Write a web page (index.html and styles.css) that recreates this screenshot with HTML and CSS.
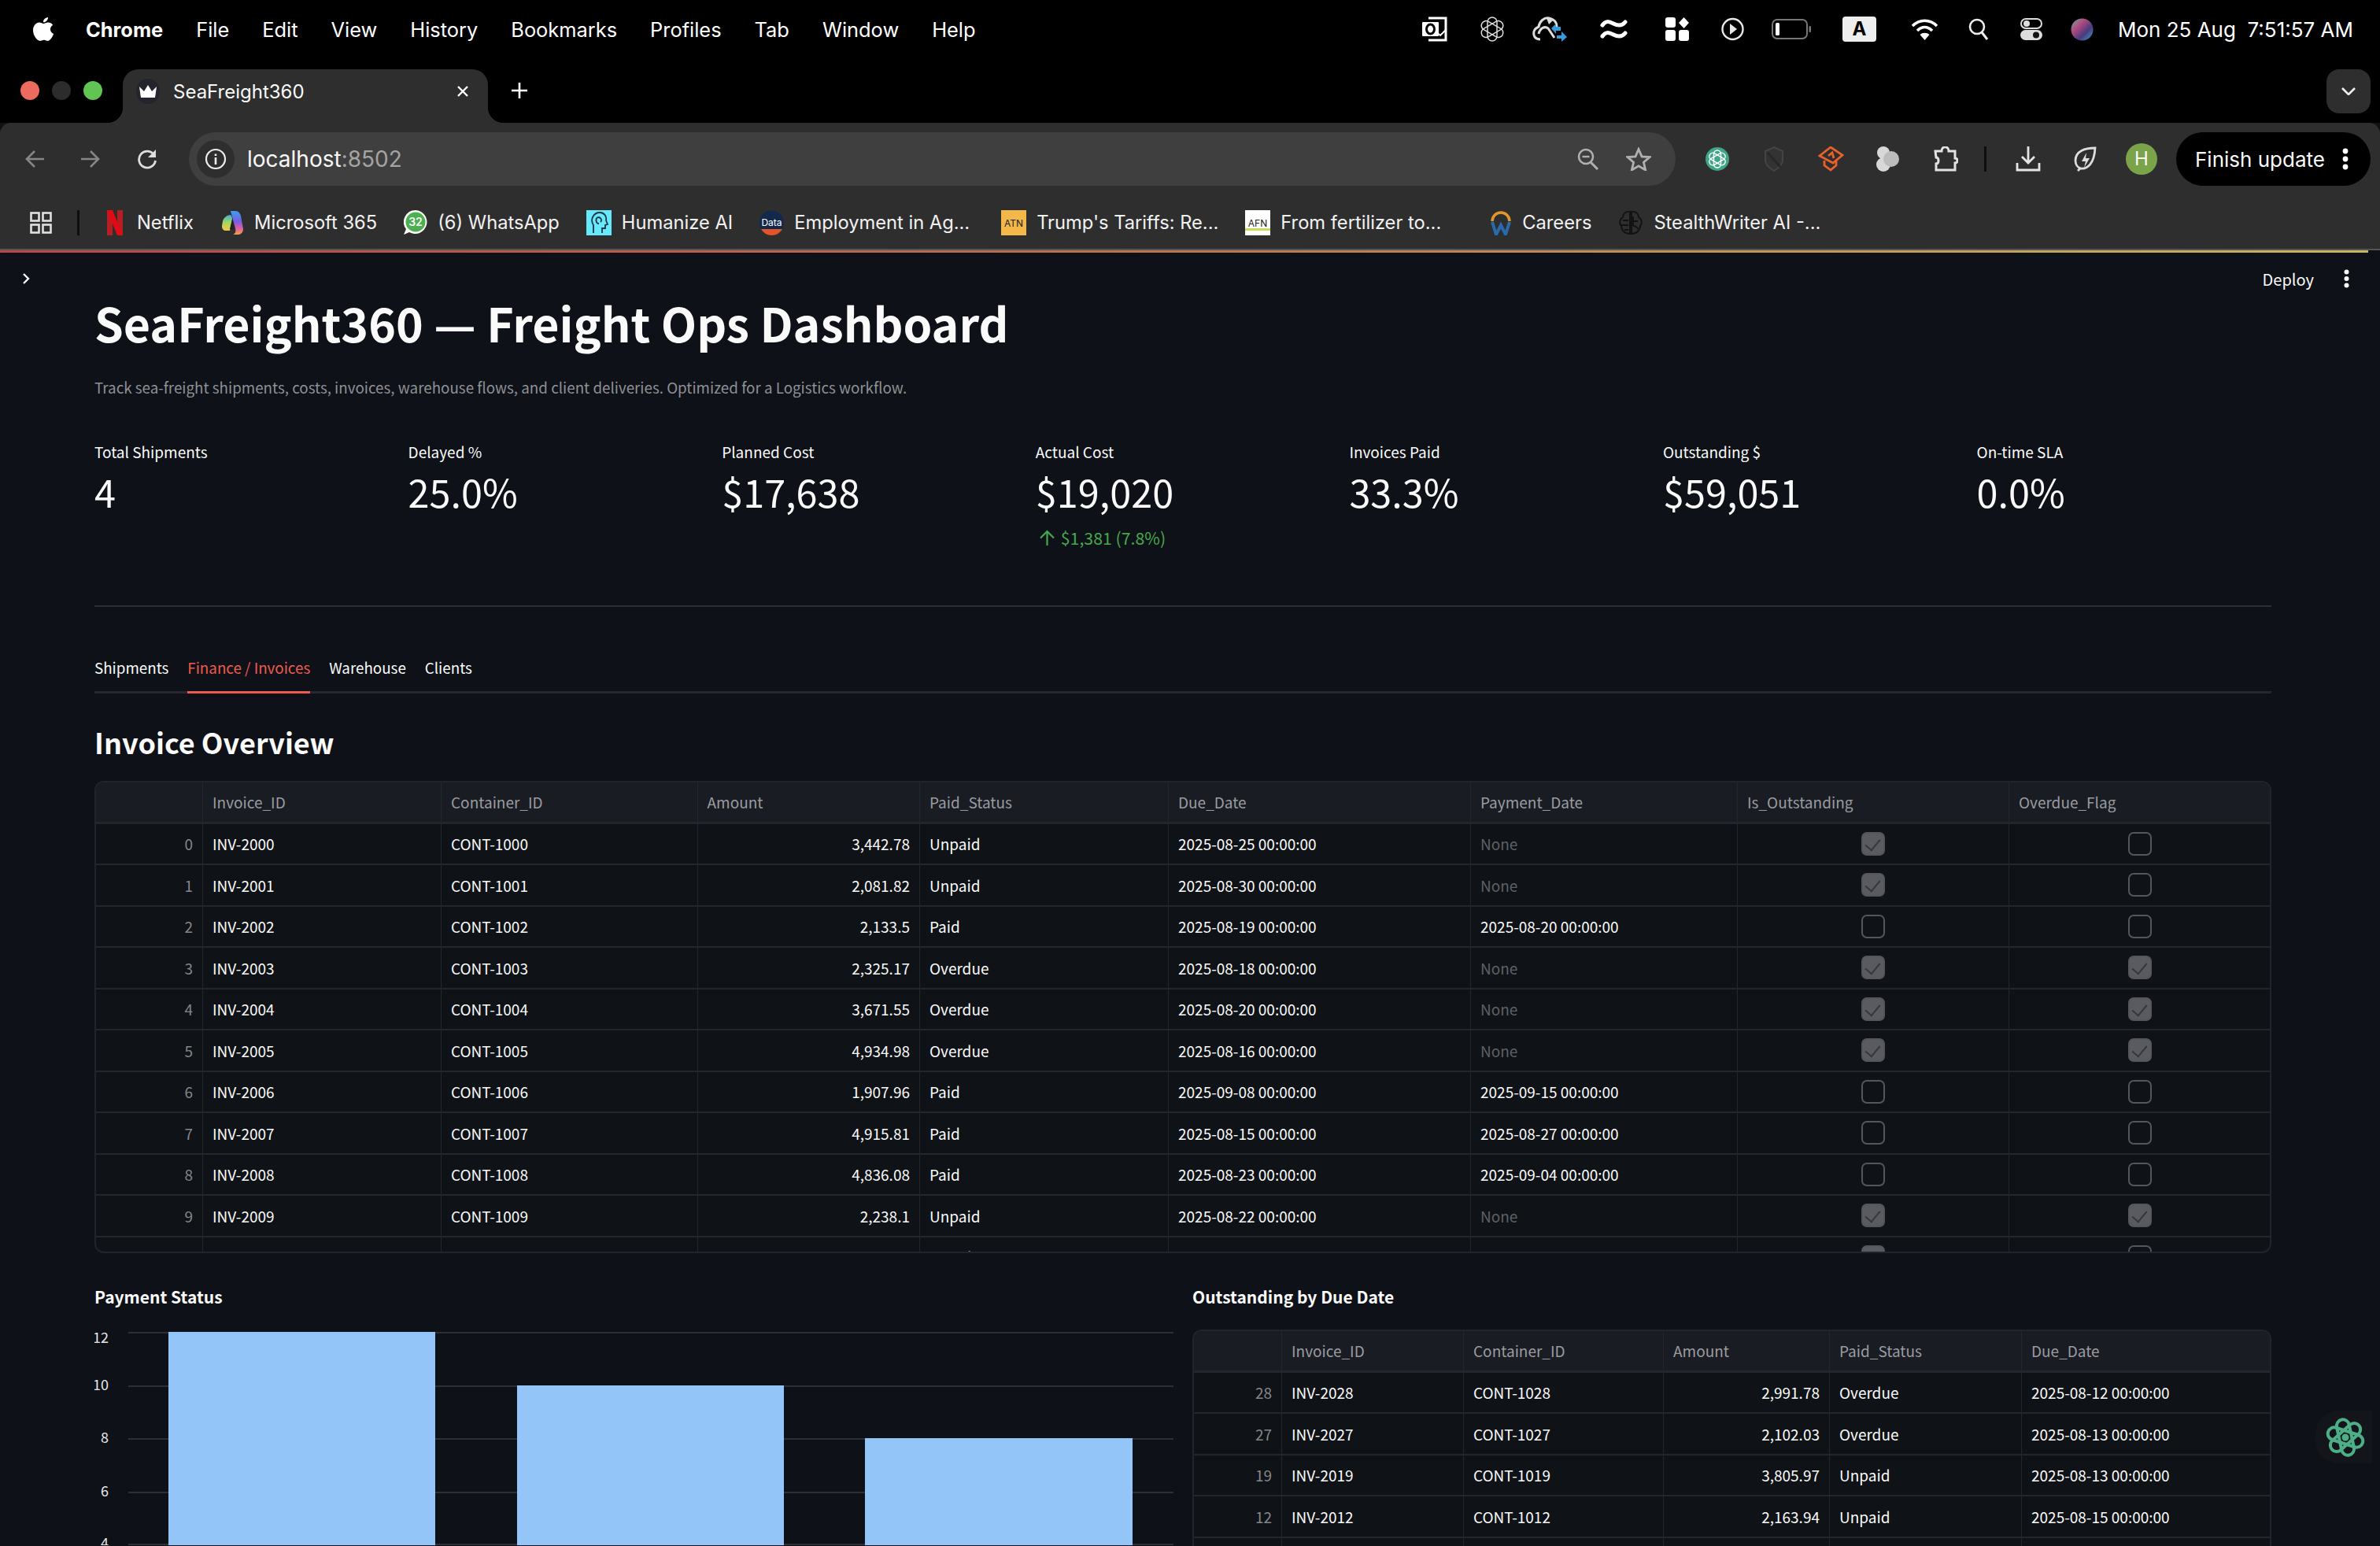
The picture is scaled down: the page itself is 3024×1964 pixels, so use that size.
FILE: index.html
```html
<!DOCTYPE html>
<html lang="en">
<head>
    <meta charset="UTF-8">
    <title>SeaFreight360</title>
    <link rel="stylesheet" href="styles.css">
</head>
<body>
    <!-- macOS menu bar -->
    <div class="menubar">
        <svg class="apple" width="28" height="33" viewBox="0 0 28 33"><path fill="#fff" d="M20 1c.3 3-2.400 6.500-6 6.300C13.600 4.200 16.800 1.200 20 1zM14.200 9c1.500 0 3.300-1.600 6-1.600 2.200 0 4.500 1.100 6 3.300-4.800 2.900-4 9.300.9 11.300-1.300 3.500-4.300 9-7.300 9-1.900 0-2.700-1.300-5-1.300s-3.200 1.300-5 1.300C6.300 31 1 24.500 1 17.600 1 11.300 5 7.500 9 7.500c2.300 0 3.900 1.500 5.200 1.500z"/></svg>
        <span class="menu-app">Chrome</span>
        <span>File</span><span>Edit</span><span>View</span><span>History</span><span>Bookmarks</span><span>Profiles</span><span>Tab</span><span>Window</span><span>Help</span>
        <div class="status">
            <svg class="st-outlook" width="32" height="32" viewBox="0 0 32 32"><path fill="none" stroke="#fff" stroke-width="3" d="M8 2h22v28H8"/><path stroke="#fff" stroke-width="2" fill="none" d="M15 17l8 7 7-7"/><rect y="7" width="21" height="18" rx="1" fill="#fff"/><ellipse cx="10.500" cy="16" rx="5" ry="6" fill="none" stroke="#000" stroke-width="3"/></svg>
            <svg class="st-gpt" width="32" height="32" viewBox="0 0 32 32"><g fill="none" stroke="#ddd" stroke-width="1.500"><rect x="10" y="1" width="12" height="30" rx="6"/><rect x="10" y="1" width="12" height="30" rx="6" transform="rotate(60 16 16)"/><rect x="10" y="1" width="12" height="30" rx="6" transform="rotate(120 16 16)"/></g></svg>
            <svg class="st-cloud" width="44" height="32" viewBox="0 0 44 32"><path fill="none" stroke="#ddd" stroke-width="3" d="M10 29C3 29 1 24 2 19 3 15 6 14 8 13 9 6 15 1 21 2c6 1 10 5 10 11"/><path fill="none" stroke="#ddd" stroke-width="3" d="M8 22c2-8 8-10 12-7l8 12"/><path fill="#ddd" d="M18 2l8 3-5 5z"/><path fill="#3a9bdc" d="M24 15l6-6v4h6v5h-6v4zM31 24h6v-5l7 7-7 6v-4h-6z"/></svg>
            <svg class="st-wave" width="36" height="28" viewBox="0 0 36 28"><g fill="none" stroke="#fff" stroke-width="5" stroke-linecap="round"><path d="M3 9c4-6 8-5 14-2s11 3 15-2"/><path d="M3 23c4-6 8-5 14-2s11 3 15-2"/></g></svg>
            <svg class="st-grid" width="31" height="30" viewBox="0 0 31 30" fill="#fff"><rect width="13" height="13" rx="3"/><path d="M23.500 0l6.500 7-6.500 7-6.500-7z"/><rect y="16" width="13" height="14" rx="3"/><rect x="17" y="16" width="13" height="14" rx="3"/></svg>
            <svg class="st-play" width="29" height="30" viewBox="0 0 29 30"><circle cx="14.500" cy="15" r="13" fill="none" stroke="#e8e8e8" stroke-width="2.400"/><path fill="#e8e8e8" d="M11 8l9 7-9 7z"/></svg>
            <svg class="st-batt" width="51" height="26" viewBox="0 0 51 26"><rect x="1" y="1" width="44" height="24" rx="6" fill="none" stroke="#777" stroke-width="2"/><rect x="5" y="5" width="5" height="16" rx="1.500" fill="#fff"/><rect x="47.500" y="9" width="2.500" height="8" rx="1" fill="#777"/></svg>
            <span class="st-key">A</span>
            <svg class="st-wifi" width="35" height="28" viewBox="0 0 35 28"><g fill="none" stroke="#fff" stroke-width="3.600"><path d="M2 10c9-9 22-9 31 0"/><path d="M8 16c6-6 13-6 19 0"/></g><path fill="#fff" d="M17.500 28l-6-7c3.500-3 8.500-3 12 0z"/></svg>
            <svg class="st-search" width="26" height="28" viewBox="0 0 26 28"><circle cx="11" cy="11" r="9" fill="none" stroke="#eee" stroke-width="2.600"/><path d="M17 18l7 9" stroke="#eee" stroke-width="3"/></svg>
            <svg class="st-ctrl" width="28" height="28" viewBox="0 0 28 28"><rect x="1" y="1" width="26" height="12" rx="6" fill="none" stroke="#ddd" stroke-width="2"/><circle cx="8" cy="7" r="4" fill="#ddd"/><rect y="15" width="28" height="13" rx="6.500" fill="#ddd"/><circle cx="20" cy="21.500" r="4" fill="#111"/></svg>
            <svg class="st-siri" width="29" height="29" viewBox="0 0 29 29"><defs><linearGradient id="siri" x1="0" y1="0" x2="1" y2="1"><stop offset="0" stop-color="#5fb0a8"/><stop offset=".35" stop-color="#b04a7c"/><stop offset=".65" stop-color="#4a3a80"/><stop offset="1" stop-color="#3f9fd0"/></linearGradient></defs><circle cx="14.500" cy="14.500" r="14" fill="url(#siri)"/></svg>
            <span class="clock">Mon 25 Aug&nbsp;&nbsp;7:51:57 AM</span>
        </div>
    </div>

    <!-- Chrome tab strip -->
    <div class="tabstrip">
        <div class="lights"><i class="red"></i><i class="off"></i><i class="green"></i></div>
        <div class="tab">
            <span class="favicon"><svg width="24" height="18" viewBox="0 0 24 18"><path fill="#fff" d="M1 3l6 6 5-8 5 8 6-6-2 14H3z"/></svg></span>
            <span class="tab-title">SeaFreight360</span>
            <svg class="tab-x" width="16" height="16" viewBox="0 0 16 16"><path stroke="#fff" stroke-width="2.400" d="M2 2l12 12M14 2L2 14"/></svg>
        </div>
        <svg class="tab-new" width="20" height="20" viewBox="0 0 20 20"><path stroke="#fff" stroke-width="2.600" d="M10 0v20M0 10h20"/></svg>
        <div class="tab-list"><svg width="18" height="10" viewBox="0 0 18 10"><path fill="none" stroke="#eee" stroke-width="2.600" d="M1 1l8 8 8-8"/></svg></div>
    </div>

    <!-- Chrome toolbar -->
    <div class="toolbar">
        <svg class="nav-back" width="24" height="24" viewBox="0 0 24 24"><path fill="none" stroke="#868686" stroke-width="2.600" d="M24 12H2M12 2L2 12l10 10"/></svg>
        <svg class="nav-fwd" width="24" height="24" viewBox="0 0 24 24"><path fill="none" stroke="#868686" stroke-width="2.600" d="M0 12h22M12 2l10 10-10 10"/></svg>
        <svg class="nav-reload" width="26" height="26" viewBox="0 0 26 26"><path fill="none" stroke="#ddd" stroke-width="2.800" d="M22 8a10.500 10.500 0 1 0 1.500 7"/><path fill="#ddd" d="M24 1v10H14z"/></svg>
        <div class="omnibox">
            <span class="site-info"><svg width="28" height="28" viewBox="0 0 28 28"><circle cx="14" cy="14" r="12" fill="none" stroke="#eee" stroke-width="2.200"/><path fill="#eee" d="M12.700 12h2.600v9h-2.600zM12.700 7.500h2.600v2.600h-2.600z"/></svg></span>
            <span class="url">localhost<em>:8502</em></span>
            <svg class="omni-zoom" width="28" height="28" viewBox="0 0 28 28"><circle cx="11" cy="11" r="9" fill="none" stroke="#b0b0b0" stroke-width="2.600"/><path d="M17 18l9 9" stroke="#b0b0b0" stroke-width="3"/><path d="M6.500 11h9" stroke="#b0b0b0" stroke-width="2.400"/></svg>
            <svg class="omni-star" width="32" height="30" viewBox="0 0 32 30"><path fill="none" stroke="#b0b0b0" stroke-width="2.800" d="M16 2.500l4 9.300 10 .8-7.600 6.600 2.300 9.800L16 23.800 7.300 29l2.300-9.800L2 12.600l10-.8z"/></svg>
        </div>
        <div class="extensions">
            <svg class="ex-gpt" width="30" height="30" viewBox="0 0 30 30"><circle cx="15" cy="15" r="15" fill="#3fa587"/><g fill="none" stroke="#fff" stroke-width="1.500"><rect x="10.500" y="4" width="9" height="22" rx="4.500"/><rect x="10.500" y="4" width="9" height="22" rx="4.500" transform="rotate(60 15 15)"/><rect x="10.500" y="4" width="9" height="22" rx="4.500" transform="rotate(120 15 15)"/></g></svg>
            <svg class="ex-shield" width="26" height="32" viewBox="0 0 26 32"><path fill="#333" stroke="#444" stroke-width="2" d="M13 1l11 5v12c0 6-6 10-11 13C8 28 2 24 2 18V6z"/><path stroke="#282828" stroke-width="3" d="M5 8l16 18"/></svg>
            <svg class="ex-orange" width="33" height="32" viewBox="0 0 33 32"><g fill="none" stroke="#e8612c" stroke-width="2.800"><path d="M16 1l15 10-12 10L2 12z"/><path d="M8 18v6l8 6 7-6v-7"/><path d="M13 12l5-4 2 7"/></g></svg>
            <svg class="ex-blob" width="30" height="32" viewBox="0 0 30 32" fill="#d8d8d8"><circle cx="10" cy="8" r="8"/><circle cx="10" cy="23" r="9"/><circle cx="20" cy="16" r="10" fill="#bcbcbc"/></svg>
            <svg class="ex-puzzle" width="32" height="32" viewBox="0 0 32 32"><path fill="none" stroke="#e2e2e2" stroke-width="3" d="M3 6h8c0-7 9-7 9 0h8v9c4 0 4 6 0 6v9H4v-8c4 0 4-8 0-8z"/></svg>
            <i class="ex-sep"></i>
            <svg class="ex-dl" width="32" height="32" viewBox="0 0 32 32"><path fill="none" stroke="#e6e6e6" stroke-width="2.800" d="M16 0v21M8 13l8 8 8-8M2 21v9h28v-9"/></svg>
            <svg class="ex-leaf" width="29" height="32" viewBox="0 0 29 32"><path fill="none" stroke="#ddd" stroke-width="2.800" d="M27 2C14 2 2 6 2 18c0 5 3 9 7 10 8 1 17-6 18-26zM8 28l-3 3"/><path fill="#ddd" d="M16 8l-6 11h5l-2 8 7-12h-5z"/></svg>
            <span class="avatar">H</span>
            <div class="finish">Finish update<svg width="8" height="28" viewBox="0 0 8 28" fill="#fff"><circle cx="4" cy="4" r="3.400"/><circle cx="4" cy="14" r="3.400"/><circle cx="4" cy="24" r="3.400"/></svg></div>
        </div>
    </div>

    <!-- Chrome bookmarks bar -->
    <div class="bookmarks">
        <svg class="bm-apps" width="28" height="28" viewBox="0 0 28 28"><g fill="none" stroke="#e0e0e0" stroke-width="2.600"><rect x="1.500" y="1.500" width="10" height="10"/><rect x="16.500" y="1.500" width="10" height="10"/><rect x="1.500" y="16.500" width="10" height="10"/><rect x="16.500" y="16.500" width="10" height="10"/></g></svg>
        <i class="bm-sep"></i>
        <a class="bm bm-netflix"><svg width="20" height="32" viewBox="0 0 20 32"><path fill="#b81d24" d="M0 0h7v32H0zM13 0h7v32h-7z"/><path fill="#e50914" d="M0 0h7l13 32h-7z"/></svg>Netflix</a>
        <a class="bm"><svg width="30" height="32" viewBox="0 0 30 32"><defs><linearGradient id="msr" x1="0" y1="0" x2="0" y2="1"><stop offset="0" stop-color="#3aa0f0"/><stop offset=".45" stop-color="#7a5ce0"/><stop offset=".75" stop-color="#e060a0"/><stop offset="1" stop-color="#f2a040"/></linearGradient><linearGradient id="msl" x1="0" y1="0" x2="0" y2="1"><stop offset="0" stop-color="#40b0d8"/><stop offset=".5" stop-color="#a8d858"/><stop offset="1" stop-color="#f0c850"/></linearGradient></defs><path fill="url(#msr)" d="M13 1h6c4 0 6 3 7 6l3 17c0 4-3 7-6 7h-7c3-1 4-4 3-8L13 1z"/><path fill="url(#msl)" d="M12 6c-5 1-8 4-9 8L2 20c0 4 2 6 5 6h5L15 12c0-3-1-6-3-6z"/><path fill="#222" d="M15 11l3 12-2 2-4-1z"/></svg>Microsoft 365</a>
        <a class="bm"><svg width="30" height="32" viewBox="0 0 30 32"><path fill="#fff" d="M15 0a15 15 0 1 1-8 28L0 31l3-7A15 15 0 0 1 15 0z"/><circle cx="15" cy="15" r="12.500" fill="#4cb050"/><text x="15" y="20" class="bm-badge">32</text></svg>(6) WhatsApp</a>
        <a class="bm"><svg width="32" height="32" viewBox="0 0 32 32"><rect width="32" height="32" fill="#66e9fb"/><path fill="none" stroke="#234" stroke-width="1.800" d="M9 29V19C4 11 10 3 17 3c6 0 9 5 8 10l2 5-3 1v4h-4v6M16 17c-4 0-5-7-1-8 4 0 5 4 3 6"/></svg>Humanize AI</a>
        <a class="bm bm-long"><svg width="31" height="32" viewBox="0 0 31 32"><circle cx="15.500" cy="16" r="15.500" fill="#12284c"/><path fill="#e2542a" d="M2 24h27a15.500 15.500 0 0 1-27 0z"/><text x="15.500" y="20" class="bm-data">Data</text></svg>Employment in Ag...</a>
        <a class="bm"><svg width="32" height="32" viewBox="0 0 32 32"><rect width="32" height="32" fill="#f4b84a"/><text x="16" y="21" class="bm-tile">ATN</text></svg>Trump's Tariffs: Re...</a>
        <a class="bm bm-wide"><svg width="32" height="32" viewBox="0 0 32 32"><rect width="32" height="32" fill="#fff"/><rect y="23" width="32" height="3" fill="#c6dd5a"/><text x="16" y="21" class="bm-tile">AFN</text></svg>From fertilizer to...</a>
        <a class="bm"><svg width="28" height="32" viewBox="0 0 28 32"><path fill="none" stroke="#e0962c" stroke-width="3.500" d="M3 14a11 11 0 0 1 22 0"/><path fill="none" stroke="#2a69aa" stroke-width="4" d="M3 15l5 16 6-12 6 12 5-16"/></svg>Careers</a>
        <a class="bm"><svg width="32" height="32" viewBox="0 0 32 32"><g fill="none" stroke="#111" stroke-width="1.800"><path d="M15 2C8 1 6 6 6 9 2 11 1 17 4 20c0 5 4 10 11 10z"/><path d="M17 2c7-1 9 4 9 7 4 2 5 8 2 11 0 5-4 10-11 10z"/><path d="M6 13h7M4 19h9M8 25h5M19 8v6M25 14h-6v6M19 20c3 0 6 2 6 4"/></g></svg>StealthWriter AI -...</a>
    </div>
    <div class="loadline"></div>

    <!-- Streamlit app -->
    <div class="app">
        <header class="app-header">
            <svg class="side-open" width="11" height="16" viewBox="0 0 11 16"><path fill="none" stroke="#fafafa" stroke-width="2.400" d="M2 2l6 6-6 6"/></svg>
            <span class="deploy">Deploy</span>
            <svg width="7" height="24" viewBox="0 0 7 24" fill="#fafafa"><circle cx="3.500" cy="3.500" r="3"/><circle cx="3.500" cy="12" r="3"/><circle cx="3.500" cy="20.500" r="3"/></svg>
        </header>
        <main class="main">
            <h1>SeaFreight360 — Freight Ops Dashboard</h1>
            <p class="caption">Track sea-freight shipments, costs, invoices, warehouse flows, and client deliveries. Optimized for a Logistics workflow.</p>

            <div class="metrics">
                <div><div class="m-label">Total Shipments</div><div class="m-value">4</div></div>
                <div><div class="m-label">Delayed %</div><div class="m-value">25.0%</div></div>
                <div><div class="m-label">Planned Cost</div><div class="m-value">$17,638</div></div>
                <div>
                    <div class="m-label">Actual Cost</div><div class="m-value">$19,020</div>
                    <div class="m-delta"><svg width="21" height="21" viewBox="0 0 21 21"><path fill="none" stroke="#45a84c" stroke-width="2.200" d="M10.500 20V2M2 10.500L10.500 2l8.500 8.500"/></svg>$1,381 (7.8%)</div>
                </div>
                <div><div class="m-label">Invoices Paid</div><div class="m-value">33.3%</div></div>
                <div><div class="m-label">Outstanding $</div><div class="m-value">$59,051</div></div>
                <div><div class="m-label">On-time SLA</div><div class="m-value">0.0%</div></div>
            </div>

            <hr class="divider">

            <nav class="tabs">
                <span>Shipments</span><span class="active">Finance / Invoices</span><span>Warehouse</span><span>Clients</span>
            </nav>

            <h2>Invoice Overview</h2>

            <div class="df df-main">
                <div class="c h"></div><div class="c h">Invoice_ID</div><div class="c h">Container_ID</div><div class="c h">Amount</div><div class="c h">Paid_Status</div><div class="c h">Due_Date</div><div class="c h">Payment_Date</div><div class="c h">Is_Outstanding</div><div class="c h end">Overdue_Flag</div>

                <div class="c idx">0</div><div class="c">INV-2000</div><div class="c">CONT-1000</div><div class="c num">3,442.78</div><div class="c">Unpaid</div><div class="c">2025-08-25 00:00:00</div><div class="c none">None</div><div class="c chk"><i class="box on"></i></div><div class="c chk end"><i class="box"></i></div>
                <div class="c idx">1</div><div class="c">INV-2001</div><div class="c">CONT-1001</div><div class="c num">2,081.82</div><div class="c">Unpaid</div><div class="c">2025-08-30 00:00:00</div><div class="c none">None</div><div class="c chk"><i class="box on"></i></div><div class="c chk end"><i class="box"></i></div>
                <div class="c idx">2</div><div class="c">INV-2002</div><div class="c">CONT-1002</div><div class="c num">2,133.5</div><div class="c">Paid</div><div class="c">2025-08-19 00:00:00</div><div class="c">2025-08-20 00:00:00</div><div class="c chk"><i class="box"></i></div><div class="c chk end"><i class="box"></i></div>
                <div class="c idx">3</div><div class="c">INV-2003</div><div class="c">CONT-1003</div><div class="c num">2,325.17</div><div class="c">Overdue</div><div class="c">2025-08-18 00:00:00</div><div class="c none">None</div><div class="c chk"><i class="box on"></i></div><div class="c chk end"><i class="box on"></i></div>
                <div class="c idx">4</div><div class="c">INV-2004</div><div class="c">CONT-1004</div><div class="c num">3,671.55</div><div class="c">Overdue</div><div class="c">2025-08-20 00:00:00</div><div class="c none">None</div><div class="c chk"><i class="box on"></i></div><div class="c chk end"><i class="box on"></i></div>
                <div class="c idx">5</div><div class="c">INV-2005</div><div class="c">CONT-1005</div><div class="c num">4,934.98</div><div class="c">Overdue</div><div class="c">2025-08-16 00:00:00</div><div class="c none">None</div><div class="c chk"><i class="box on"></i></div><div class="c chk end"><i class="box on"></i></div>
                <div class="c idx">6</div><div class="c">INV-2006</div><div class="c">CONT-1006</div><div class="c num">1,907.96</div><div class="c">Paid</div><div class="c">2025-09-08 00:00:00</div><div class="c">2025-09-15 00:00:00</div><div class="c chk"><i class="box"></i></div><div class="c chk end"><i class="box"></i></div>
                <div class="c idx">7</div><div class="c">INV-2007</div><div class="c">CONT-1007</div><div class="c num">4,915.81</div><div class="c">Paid</div><div class="c">2025-08-15 00:00:00</div><div class="c">2025-08-27 00:00:00</div><div class="c chk"><i class="box"></i></div><div class="c chk end"><i class="box"></i></div>
                <div class="c idx">8</div><div class="c">INV-2008</div><div class="c">CONT-1008</div><div class="c num">4,836.08</div><div class="c">Paid</div><div class="c">2025-08-23 00:00:00</div><div class="c">2025-09-04 00:00:00</div><div class="c chk"><i class="box"></i></div><div class="c chk end"><i class="box"></i></div>
                <div class="c idx">9</div><div class="c">INV-2009</div><div class="c">CONT-1009</div><div class="c num">2,238.1</div><div class="c">Unpaid</div><div class="c">2025-08-22 00:00:00</div><div class="c none">None</div><div class="c chk"><i class="box on"></i></div><div class="c chk end"><i class="box on"></i></div>
                <div class="c idx">10</div><div class="c">INV-2010</div><div class="c">CONT-1010</div><div class="c num">3,021.15</div><div class="c">Overdue</div><div class="c">2025-08-07 00:00:00</div><div class="c none">None</div><div class="c chk"><i class="box on"></i></div><div class="c chk end"><i class="box"></i></div>
            </div>

            <div class="split">
                <section>
                    <h3>Payment Status</h3>
                    <svg class="chart" width="1371" height="274" viewBox="0 -1 1371 274">
                        <g stroke="#2d2f36" stroke-width="2">
                            <path d="M43 3H1371M43 71H1371M43 138H1371M43 206H1371M43 272H1371"/>
                        </g>
                        <g fill="#93c5f9">
                            <rect x="94" y="2" width="339" height="272"/>
                            <rect x="537" y="70" width="339" height="204"/>
                            <rect x="979" y="137" width="340" height="137"/>
                        </g>
                        <g class="tick">
                            <text x="18" y="16">12</text>
                            <text x="18" y="76">10</text>
                            <text x="18" y="143">8</text>
                            <text x="18" y="211">6</text>
                            <text x="18" y="277">4</text>
                        </g>
                    </svg>
                </section>
                <section>
                    <h3>Outstanding by Due Date</h3>
                    <div class="df df-side">
                        <div class="c h"></div><div class="c h">Invoice_ID</div><div class="c h">Container_ID</div><div class="c h">Amount</div><div class="c h">Paid_Status</div><div class="c h end">Due_Date</div>
                        <div class="c idx">28</div><div class="c">INV-2028</div><div class="c">CONT-1028</div><div class="c num">2,991.78</div><div class="c">Overdue</div><div class="c end">2025-08-12 00:00:00</div>
                        <div class="c idx">27</div><div class="c">INV-2027</div><div class="c">CONT-1027</div><div class="c num">2,102.03</div><div class="c">Overdue</div><div class="c end">2025-08-13 00:00:00</div>
                        <div class="c idx">19</div><div class="c">INV-2019</div><div class="c">CONT-1019</div><div class="c num">3,805.97</div><div class="c">Unpaid</div><div class="c end">2025-08-13 00:00:00</div>
                        <div class="c idx">12</div><div class="c">INV-2012</div><div class="c">CONT-1012</div><div class="c num">2,163.94</div><div class="c">Unpaid</div><div class="c end">2025-08-15 00:00:00</div>
                        <div class="c"></div><div class="c"></div><div class="c"></div><div class="c"></div><div class="c"></div><div class="c end"></div>
                    </div>
                </section>
            </div>
        </main>

        <!-- floating extension button -->
        <div class="float-btn">
            <svg width="50" height="52" viewBox="0 0 50 52"><g fill="none" stroke="#4caf87" stroke-width="4" transform="rotate(-12 25 26)"><rect x="17" y="3" width="16" height="46" rx="8"/><rect x="17" y="3" width="16" height="46" rx="8" transform="rotate(60 25 26)"/><rect x="17" y="3" width="16" height="46" rx="8" transform="rotate(120 25 26)"/></g><circle cx="25" cy="26" r="4.500" fill="#4caf87"/></svg>
        </div>
    </div>
</body>
</html>
```
FILE: styles.css
```css
html, body {
    margin: 0;
    padding: 0;
}
body {
    width: 3024px;
    height: 1964px;
    overflow: hidden;
    background-color: #0e1117;
    color: #fafafa;
    font-family: Inter, "Liberation Sans", sans-serif;
}

/* menu bar */
.menubar {
    height: 78px;
    padding: 0 34px 4px 41px;
    box-sizing: border-box;
    background-color: #000;
    display: flex;
    align-items: center;
    gap: 42px;
    color: #fff;
    font-size: 25.400px;
}
.apple {
    margin-right: -2px;
}
.menu-app {
    font-weight: 700;
}
.status {
    margin-left: auto;
    display: flex;
    align-items: center;
}
.st-outlook { margin-right: 41px; }
.st-gpt { margin-right: 35px; }
.st-cloud { margin-right: 42px; }
.st-wave { margin-right: 47px; }
.st-grid { margin-right: 40px; }
.st-play { margin-right: 35px; }
.st-batt { margin-right: 39px; }
.st-wifi { margin-right: 38px; }
.st-search { margin-right: 40px; }
.st-ctrl { margin-right: 36px; }
.st-siri { margin-right: 31px; }
.st-key {
    width: 43px;
    height: 32px;
    margin-right: 44px;
    background-color: #eee;
    color: #000;
    border-radius: 4px;
    font-size: 24px;
    font-weight: 700;
    line-height: 32px;
    text-align: center;
}
.clock {
    font-size: 26px;
}

/* tab strip */
.tabstrip {
    height: 78px;
    background-color: #000;
    display: flex;
    align-items: flex-start;
    position: relative;
}
.lights {
    width: 156px;
    height: 74px;
    padding-left: 26px;
    box-sizing: border-box;
    display: flex;
    align-items: center;
    gap: 16px;
}
.lights i {
    width: 24px;
    height: 24px;
    border-radius: 50%;
}
.lights .red { background-color: #ec6a5e; }
.lights .off { background-color: #2c2c2c; }
.lights .green { background-color: #61c554; }
.tab {
    width: 464px;
    height: 68px;
    margin-top: 10px;
    background-color: #2e2e2e;
    border-radius: 20px 20px 0 0;
    display: flex;
    align-items: center;
    padding: 0 24px 12px 17px;
    box-sizing: border-box;
    position: relative;
    font-size: 24px;
}
.tab::before,
.tab::after {
    content: "";
    position: absolute;
    bottom: 0;
    width: 20px;
    height: 20px;
}
.tab::before {
    left: -20px;
    background: radial-gradient(circle at 0 0, #000 20px, #2e2e2e 20.500px);
}
.tab::after {
    right: -20px;
    background: radial-gradient(circle at 100% 0, #000 20px, #2e2e2e 20.500px);
}
.favicon {
    width: 30px;
    height: 32px;
    background-color: #23242c;
    border-radius: 50%;
    display: flex;
    align-items: center;
    justify-content: center;
    margin-right: 17px;
}
.tab-title {
    flex: 1;
}
.tab-new {
    margin: 27px 0 0 30px;
}
.tab-list {
    width: 56px;
    height: 56px;
    margin: 10px 12px 0 auto;
    background-color: #2e2e2e;
    border-radius: 16px;
    display: flex;
    align-items: center;
    justify-content: center;
}

/* toolbar */
.toolbar {
    height: 100px;
    padding: 12px 12px 20px 32px;
    box-sizing: border-box;
    background-color: #2e2e2e;
    border-radius: 14px 14px 0 0;
    display: flex;
    align-items: center;
    position: relative;
}
.nav-back { margin-right: 47px; }
.nav-fwd { margin-right: 47px; }
.nav-reload { margin-right: 40px; }
.omnibox {
    width: 1889px;
    height: 68px;
    background-color: #3f3f3f;
    border-radius: 34px;
    padding: 0 31px 0 10px;
    box-sizing: border-box;
    display: flex;
    align-items: center;
}
.site-info {
    width: 48px;
    height: 48px;
    background-color: #2e2e2e;
    border-radius: 50%;
    display: flex;
    align-items: center;
    justify-content: center;
    margin-right: 16px;
}
.url {
    flex: 1;
    font-size: 28px;
}
.url em {
    font-style: normal;
    color: #a4a4a4;
}
.omni-zoom { margin-right: 34px; }
.extensions {
    flex: 1;
    display: flex;
    align-items: center;
    padding-left: 38px;
}
.ex-gpt { margin-right: 44px; }
.ex-shield { margin-right: 43px; }
.ex-orange { margin-right: 40px; }
.ex-blob { margin-right: 43px; }
.ex-puzzle { margin-right: 33px; }
.ex-sep {
    width: 3px;
    height: 32px;
    background-color: #0e0e0e;
    margin-right: 37px;
}
.ex-dl { margin-right: 42px; }
.ex-leaf { margin-right: 37px; }
.avatar {
    width: 40px;
    height: 40px;
    background-color: #7aa34a;
    border-radius: 50%;
    font-size: 24px;
    line-height: 40px;
    text-align: center;
    margin-right: 24px;
}
.finish {
    flex: 1;
    height: 68px;
    background-color: #000;
    border-radius: 34px;
    display: flex;
    align-items: center;
    justify-content: space-between;
    padding: 0 28px 0 24px;
    font-size: 26px;
}

/* bookmarks */
.bookmarks {
    height: 60px;
    padding: 0 0 7px 38px;
    box-sizing: border-box;
    background-color: #2e2e2e;
    display: flex;
    align-items: center;
    font-size: 23.700px;
}
.bm-sep {
    width: 3px;
    height: 32px;
    background-color: #0e0e0e;
    margin: 0 35px 0 32px;
}
.bm {
    display: flex;
    align-items: center;
    gap: 13px;
    margin-right: 34px;
    color: #f2f2f2;
}
.bm-netflix { gap: 18px; }
.bm-long { margin-right: 40px; }
.bm-wide { margin-right: 62px; }
.bm-badge {
    fill: #fff;
    font-size: 14px;
    font-weight: 600;
    text-anchor: middle;
}
.bm-data {
    fill: #fff;
    font-size: 12px;
    text-anchor: middle;
}
.bm-tile {
    fill: #222;
    font-size: 12px;
    text-anchor: middle;
}
.loadline {
    height: 5px;
    box-sizing: border-box;
    border-top: 2px solid #555;
    background: linear-gradient(90deg, #b8474a, #b86a4c 40%, #c8b560 99.500%, #0e1117 99.500%);
}

/* streamlit app */
.app {
    height: 1643px;
    position: relative;
    font-family: "Noto Sans CJK JP", "Noto Sans", sans-serif;
}
.app-header {
    position: absolute;
    top: 0;
    left: 28px;
    right: 39px;
    height: 66px;
    display: flex;
    align-items: center;
    font-size: 20px;
}
.deploy {
    margin: 0 38px 0 auto;
}
.main {
    padding: 54px 138px 0 120px;
}
h1 {
    margin: 0;
    font-size: 59px;
    line-height: 70px;
    font-weight: 700;
}
.caption {
    margin: 32px 0 0;
    font-size: 18.800px;
    line-height: 30px;
    color: #8e9096;
}
.metrics {
    margin-top: 52px;
    height: 139px;
    display: grid;
    grid-template-columns: repeat(7, 398.600px);
}
.m-label {
    font-size: 19px;
    line-height: 30px;
}
.m-value {
    font-size: 48.600px;
    line-height: 70px;
}
.m-delta {
    margin-top: 9px;
    padding-left: 4px;
    display: flex;
    align-items: center;
    gap: 7px;
    font-size: 21.300px;
    line-height: 30px;
    color: #45a84c;
}
.divider {
    margin: 71px 0 0;
    border: 0;
    border-top: 2px solid #2d2f36;
}
.tabs {
    margin-top: 48px;
    padding-top: 14px;
    display: flex;
    gap: 24px;
    border-bottom: 3px solid #262730;
    font-size: 18.800px;
    line-height: 30px;
}
.tabs span {
    padding-bottom: 15px;
    margin-bottom: -3px;
}
.tabs .active {
    color: #ee5a4f;
    border-bottom: 3px solid #ee5a4f;
}
h2 {
    margin: 36px 0 25px;
    font-size: 36px;
    line-height: 50px;
    font-weight: 600;
}
h3 {
    margin: 0 0 27px;
    font-size: 21px;
    line-height: 30px;
    font-weight: 600;
}

/* dataframes */
.df {
    display: grid;
    grid-auto-rows: 52.500px;
    border: 2px solid #22242b;
    border-bottom-width: 0;
    border-radius: 12px 12px 0 0;
    overflow: hidden;
    font-size: 19px;
    background-color: #0f1216;
}
.df-main {
    height: 600px;
    box-sizing: border-box;
    border-bottom-width: 2px;
    border-radius: 12px;
    grid-template-columns: 136px 303px 325.500px 282.500px 316px 384px 339px 345px 1fr;
}
.df-side {
    grid-template-columns: 112px 231px 254px 211px 244px 1fr;
}
.c {
    display: flex;
    align-items: center;
    padding: 0 12px;
    box-sizing: border-box;
    border-right: 1px solid #24262d;
    border-bottom: 2px solid #24262d;
    white-space: nowrap;
    min-width: 0;
}
.c.end {
    border-right: 0;
}
.h {
    background-color: #1a1c24;
    color: #9a9b9f;
    border-bottom-width: 3px;
}
.idx {
    justify-content: flex-end;
    color: #85868a;
}
.num {
    justify-content: flex-end;
}
.none {
    color: #5e6066;
}
.chk {
    justify-content: center;
}
.box {
    width: 30px;
    height: 30px;
    box-sizing: border-box;
    border: 2px solid #55565b;
    border-radius: 7px;
}
.box.on {
    background-color: #5a5b60;
    position: relative;
}
.box.on::after {
    content: "";
    position: absolute;
    left: 7px;
    top: 3px;
    width: 9px;
    height: 16px;
    border: solid #36373b;
    border-width: 0 2px 2px 0;
    transform: rotate(40deg);
}

/* bottom row */
.split {
    margin-top: 40px;
    display: grid;
    grid-template-columns: 1371px 1371px;
    gap: 24px;
}
.chart {
    display: block;
}
.tick text {
    fill: #e6e6e6;
    font-size: 18px;
    text-anchor: end;
}

.float-btn {
    position: absolute;
    right: 10px;
    top: 1471px;
    width: 72px;
    height: 67px;
    padding-left: 4px;
    box-sizing: border-box;
    background-color: #14151a;
    border-radius: 30px 0 0 30px;
    display: flex;
    align-items: center;
    justify-content: center;
}
```
